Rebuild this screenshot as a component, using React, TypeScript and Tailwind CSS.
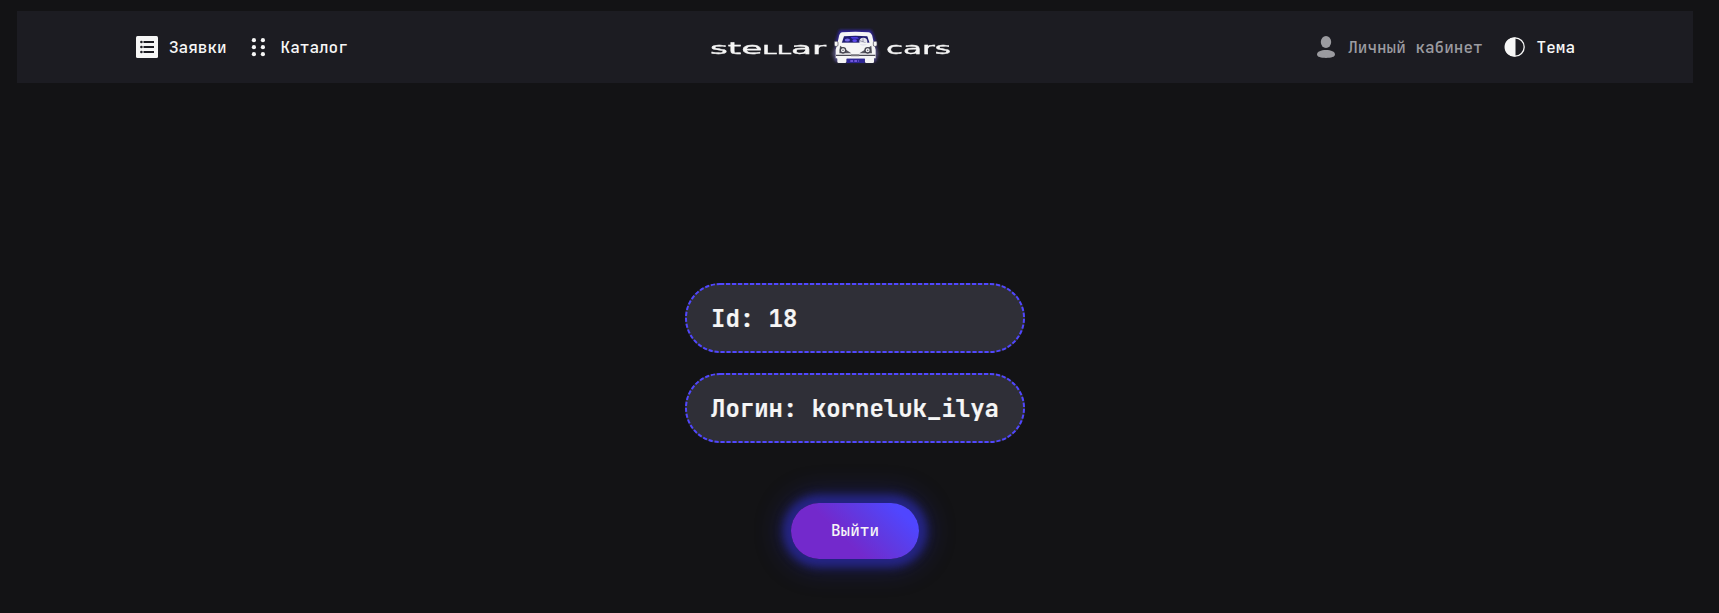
import type { ReactNode } from "react";

function ListIcon() {
  return (
    <svg width="22" height="22" viewBox="0 0 22 22" className="shrink-0">
      <rect width="22" height="22" rx="1.500" fill="#f6f6f6" />
      <g fill="#1c1c22">
        <rect x="7.500" y="5" width="10.500" height="2" />
        <rect x="7.500" y="10" width="10.500" height="2" />
        <rect x="7.500" y="15" width="10.500" height="2" />
        <circle cx="5.400" cy="6" r="1.300" />
        <circle cx="5.400" cy="11" r="1.300" />
        <circle cx="5.400" cy="16" r="1.300" />
      </g>
    </svg>
  );
}

function DotsIcon() {
  return (
    <svg width="22" height="22" viewBox="0 0 22 22" fill="#f6f6f6" className="shrink-0">
      {[4.2, 11.2, 18.2].map((y) => (
        <g key={y}>
          <circle cx="5.900" cy={y} r="2.100" />
          <circle cx="14.900" cy={y} r="2.100" />
        </g>
      ))}
    </svg>
  );
}

function UserIcon() {
  return (
    <svg width="22" height="22" viewBox="0 0 22 22" fill="#9b9ba0" className="shrink-0">
      <ellipse cx="11" cy="6" rx="5.200" ry="6" />
      <path d="M2 18.600c0-3 4-4.600 9-4.600s9 1.600 9 4.600C20 21 16 22 11 22s-9-1-9-3.400z" />
    </svg>
  );
}

function ThemeIcon() {
  return (
    <svg width="22" height="22" viewBox="0 0 22 22" className="shrink-0">
      <circle cx="11" cy="11" r="9.200" fill="none" stroke="#f6f6f6" strokeWidth="1.300" />
      <path d="M11.500 1.500A9.600 9.600 0 1 0 11.500 20.500z" fill="#f6f6f6" />
    </svg>
  );
}

function CarLogo() {
  return (
    <svg width="50" height="38" viewBox="30 28 150 114" className="shrink-0 overflow-visible">
      <defs>
        <filter id="halo" x="-30%" y="-30%" width="160%" height="160%">
          <feGaussianBlur stdDeviation="5" />
        </filter>
      </defs>
      <path d="M58 31H154L166 64V124H48V64z" fill="#30269e" filter="url(#halo)" />
      <path d="M46 78H168L176 102L166 126H46L36 102z" fill="#5e5a80" opacity=".75" filter="url(#halo)" />
      <path d="M66 38Q107 35 146 38Q156 40 158 54L163 76L167 90V116H47V90L51 76L56 54Q58 40 66 38z" fill="#f5f5f5" />
      <path d="M72 50Q106 46 142 50L149 71H65z" fill="#201c70" />
      <ellipse cx="82" cy="61" rx="8" ry="4.500" fill="#776be8" />
      <ellipse cx="104" cy="63" rx="7" ry="4" fill="#5b48ee" />
      <path d="M92 52h20l5 5H96z" fill="#4938db" />
      <circle cx="130" cy="66" r="12" fill="#e4e3ed" />
      <path d="M120 63l18 7M129 56v11" stroke="#77758c" strokeWidth="2" />
      <path d="M62 71H150" stroke="#f5f5f5" strokeWidth="4" />
      <rect x="43" y="65" width="11" height="15" rx="4" fill="#f5f5f5" stroke="#44434e" strokeWidth="2" />
      <rect x="160" y="65" width="11" height="15" rx="4" fill="#f5f5f5" stroke="#44434e" strokeWidth="2" />
      <path d="M60 78L94 101H58zM154 78L118 101H156z" fill="#57565f" />
      <circle cx="69" cy="92" r="8" fill="#f5f5f5" stroke="#44434e" strokeWidth="4" />
      <circle cx="143" cy="92" r="8" fill="#f5f5f5" stroke="#44434e" strokeWidth="4" />
      <circle cx="69" cy="92" r="2.500" fill="#66656f" />
      <circle cx="143" cy="92" r="2.500" fill="#66656f" />
      <path d="M48 107H166" stroke="#4b4a54" strokeWidth="4" />
      <rect x="93" y="104" width="25" height="8" fill="#77767e" />
      <rect x="52" y="110" width="110" height="7" rx="2" fill="#f5f5f5" />
      <path d="M80 117H134V130H80z" fill="#2f2795" />
      <path d="M91 124H117" stroke="#8664f2" strokeWidth="5" strokeDasharray="8 4" />
      <rect x="52" y="112" width="27" height="18" rx="4" fill="#f5f5f5" />
      <rect x="135" y="112" width="27" height="18" rx="4" fill="#f5f5f5" />
    </svg>
  );
}

function NavItem({ icon, label, muted = false }: { icon: ReactNode; label: string; muted?: boolean }) {
  return (
    <a className={`flex items-center gap-[11px] whitespace-nowrap ${muted ? "text-[#9b9ba0]" : "text-[#f6f6f6]"}`}>
      {icon}
      <span className="pt-0.5">{label}</span>
    </a>
  );
}

function InfoCard({ children }: { children: ReactNode }) {
  return (
    <div className="relative flex h-[70px] w-[340px] items-center whitespace-pre rounded-[35px] bg-[#2f2f37] px-[26px] pt-px text-2xl font-bold text-[#f6f6f6] [-webkit-text-stroke:0.2px_#f6f6f6]">
      <svg width="340" height="70" className="absolute inset-0" fill="none">
        <rect x="1" y="1" width="338" height="68" rx="34" stroke="#5046ff" strokeWidth="2" strokeDasharray="4.200 1.800" />
      </svg>
      {children}
    </div>
  );
}

export default function App() {
  return (
    <div className="min-h-screen overflow-hidden bg-[#131315] pr-[26px] pl-[17px] pt-[11px] font-['JetBrains_Mono','DejaVu_Sans_Mono',monospace]">
      <header className="grid h-[72px] grid-cols-[1fr_auto_1fr] items-center bg-[#1c1c22] pr-[118px] pl-[119px] text-base font-medium">
        <nav className="flex gap-[21px]">
          <NavItem icon={<ListIcon />} label="Заявки" />
          <NavItem icon={<DotsIcon />} label="Каталог" />
        </nav>
        <div className="flex -translate-x-[26px] translate-y-px items-center font-['DejaVu_Sans',sans-serif] font-normal text-[#f6f6f6] [-webkit-text-stroke:0.35px_#f6f6f6]">
          <div className="w-[114px] pt-0.5">
            <span className="inline-block origin-left scale-x-[2.140] text-base">
              ste<span className="text-[17px] leading-none [font-variant-caps:small-caps]">ll</span>ar
            </span>
          </div>
          <div className="mx-[6px] flex [-webkit-text-stroke:0]">
            <CarLogo />
          </div>
          <div className="w-[64px] pt-0.5">
            <span className="inline-block origin-left scale-x-[1.940] text-base">cars</span>
          </div>
        </div>
        <nav className="flex justify-end gap-[21px]">
          <NavItem icon={<UserIcon />} label="Личный кабинет" muted />
          <NavItem icon={<ThemeIcon />} label="Тема" />
        </nav>
      </header>
      <main className="flex flex-col items-center pt-[200px]">
        <div className="flex flex-col gap-5">
          <InfoCard>Id: 18</InfoCard>
          <InfoCard>Логин: korneluk_ilya</InfoCard>
        </div>
        <button className="mt-[60px] h-14 w-32 rounded-[28px] bg-[linear-gradient(45deg,#7329cc_40%,#5e3be4_65%,#5046ff_85%)] text-base font-medium text-[#f6f6f6] shadow-[0_0_8px_8px_#252585,0_0_24px_12px_#25258570]">
          Выйти
        </button>
      </main>
    </div>
  );
}
